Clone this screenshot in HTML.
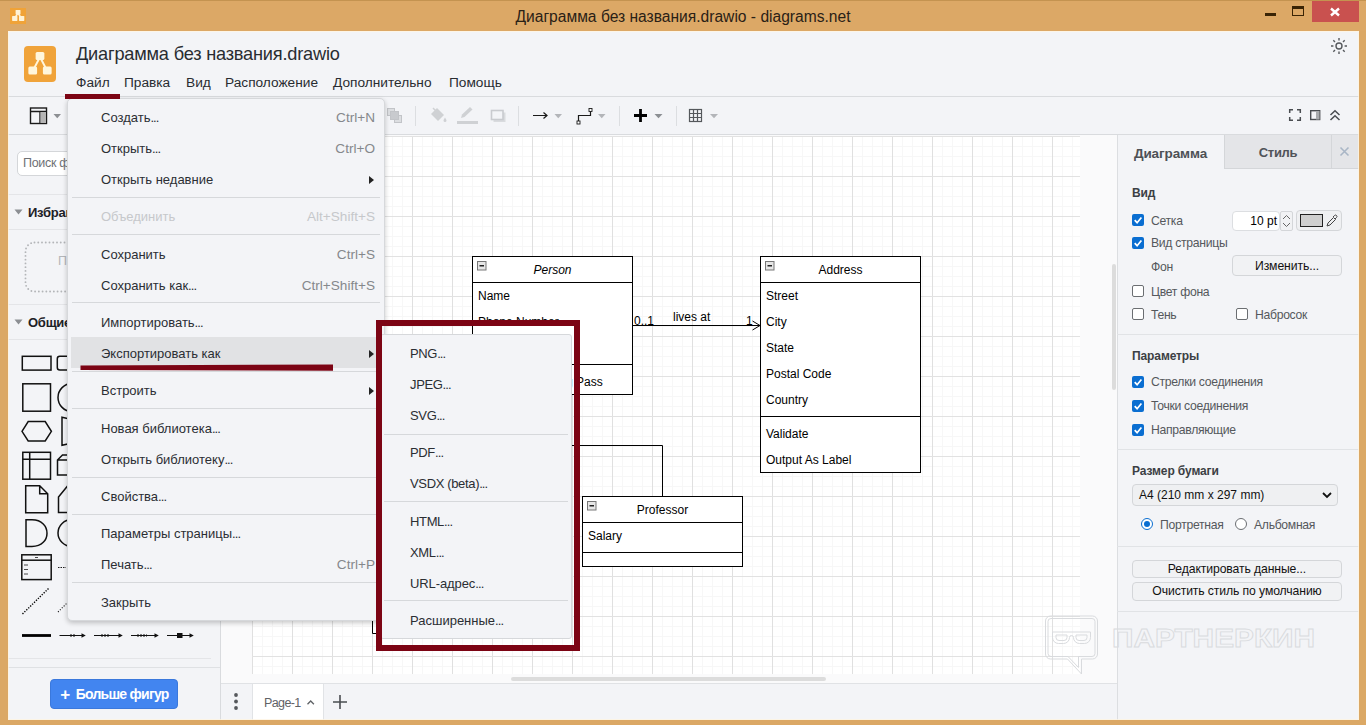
<!DOCTYPE html>
<html><head><meta charset="utf-8">
<style>
*{box-sizing:border-box;margin:0;padding:0}
html,body{width:1366px;height:725px;overflow:hidden}
body{font-family:"Liberation Sans",sans-serif;background:#dba865;position:relative;color:#1f2328;font-size:13px}
.a,.a>*{position:absolute}
.t{white-space:nowrap;line-height:16px;height:16px}
#titlebar{left:0;top:0;width:1366px;height:31px;background:#dca866;border-top:1px solid #c49350}
#wtitle{left:0;width:1366px;top:9px;text-align:center;font-size:15.6px;color:#2a2116}
#closebtn{left:1312px;top:1px;width:47px;height:21px;background:#c9514f}
#app{left:8px;top:31px;width:1351px;height:689px;background:#f3f4f7;overflow:hidden}
.h{background:#d9dbde;height:1px}
.v{background:#d9dbde;width:1px}
#logo{left:16px;top:15px;width:32px;height:36px;background:#f0a33a;border-radius:4px}
#fname{left:68px;top:15px;font-size:18.2px;color:#292c31;letter-spacing:-.2px}
.mi{top:44px;font-size:13.7px;color:#292c31}
#canvas{left:213px;top:104px;width:896px;height:548px;background:#fafafb;overflow:hidden}
#page{left:31px;top:1px;width:828px;height:538px;background-color:#fff;
background-image:linear-gradient(#e2e2e2 1px,transparent 1px),linear-gradient(90deg,#e0e0e0 1px,transparent 1px),linear-gradient(#f7f7f7 1px,transparent 1px),linear-gradient(90deg,#f7f7f7 1px,transparent 1px);
background-size:40px 40px,40px 40px,10px 10px,10px 10px;background-position:0 0,0 0,0 0,0 0}
.uml{border:1px solid #000;background:#fff}
.u{font-size:12px;color:#000;white-space:nowrap;line-height:14px;height:14px}
.cb{width:12px;height:12px;border-radius:2px}
.on{background:#0a6ed1}
.off{background:#fff;border:1px solid #6b6e72}
.lbl{font-size:12.2px;color:#55585c;letter-spacing:-.3px}
.bold{font-weight:bold;font-size:12px;color:#3c3f44;letter-spacing:-.1px}
.btn{background:#f1f2f4;border:1px solid #d4d6d9;border-radius:4px;text-align:center;font-size:12.2px;color:#111;line-height:17px;letter-spacing:-.1px}
#menu1{left:59px;top:67px;width:318px;height:523px;background:#f3f4f7;border:1px solid #d6d8db;border-radius:5px;box-shadow:0 2px 5px rgba(0,0,0,.22)}
#menu2{left:372px;top:302.5px;width:191.5px;height:305px;background:#f3f4f7;border:1px solid #d6d8db;border-radius:3px}
#menu2 .m{left:29px;margin-top:0}
#menu2 .l{letter-spacing:-.35px}
#menu2 .sep{left:3px;right:3px}
.m{left:33px;font-size:13px;color:#2b2e33;margin-top:1px}
.d{letter-spacing:-.9px}
.sc{right:9px;font-size:13.6px;color:#85888c;text-align:right;margin-top:1px}
.sep{left:4px;right:4px;height:1px;background:#d6d8db}
.dis{color:#c6c8cb}
.arr{right:10.5px;margin-top:1px;width:0;height:0;border-left:5px solid #222;border-top:4px solid transparent;border-bottom:4px solid transparent}
.red{background:#7c0414}
</style></head><body class="a">
<div id="titlebar"></div>
<div id="wtitle" class="t">Диаграмма без названия.drawio - diagrams.net</div>
<svg style="left:10px;top:8px" width="16" height="16" viewBox="0 0 16 16"><rect width="16" height="16" fill="#f0a338"/><path d="M8 5 L4.8 10 M8 5 L11.2 10" stroke="#fff3d6" stroke-width="1.5"/><rect x="5.6" y="2" width="4.9" height="4.4" rx=".6" fill="#fff3d6"/><rect x="2.1" y="8" width="5.3" height="4.9" rx=".6" fill="#fff3d6"/><rect x="9" y="8" width="5.3" height="4.9" rx=".6" fill="#fff3d6"/></svg>
<div style="left:1265px;top:13px;width:11px;height:3px;background:#3a2405"></div>
<div style="left:1292px;top:6px;width:12px;height:10px;border:1.5px solid #3a2405;border-top-width:3px"></div>
<div id="closebtn"></div>
<svg style="left:1329px;top:6px" width="12" height="12" viewBox="0 0 12 12"><path d="M2 2.5 L10 9.5 M10 2.5 L2 9.5" stroke="#fff" stroke-width="2.4"/></svg>
<div id="app" class="a">
 <div id="logo"></div>
 <svg style="left:16px;top:15px" width="32" height="36" viewBox="0 0 33 36" preserveAspectRatio="none"><path d="M16.5 11 L9 25 M16.5 11 L24 25" stroke="#fff6dc" stroke-width="2"/><rect x="12" y="6" width="9" height="8" rx="1.5" fill="#fff6dc"/><rect x="4.5" y="20.5" width="9" height="8" rx="1.5" fill="#fff6dc"/><rect x="19.5" y="20.5" width="9" height="8" rx="1.5" fill="#fff6dc"/></svg>
 <div id="fname" class="t">Диаграмма без названия.drawio</div>
 <div class="t mi" style="left:68px">Файл</div>
 <div class="t mi" style="left:116px">Правка</div>
 <div class="t mi" style="left:178px">Вид</div>
 <div class="t mi" style="left:217px">Расположение</div>
 <div class="t mi" style="left:325px">Дополнительно</div>
 <div class="t mi" style="left:441px">Помощь</div>
 <svg style="left:1322px;top:6px" width="18" height="18" viewBox="0 0 18 18" fill="none" stroke="#55585c" stroke-width="1.4"><circle cx="9" cy="9" r="3"/><path d="M9 1v2.4M9 14.6V17M1 9h2.4M14.6 9H17M3.3 3.3l1.7 1.7M13 13l1.7 1.7M14.7 3.3L13 5M5 13l-1.7 1.7"/></svg>
 <div class="h" style="left:0;top:65px;width:1351px"></div>
 <div class="h" style="left:0;top:103px;width:1351px"></div>
 <svg style="left:0;top:66px" width="1351" height="37" viewBox="8 97 1351 37">
  <g fill="none" stroke="#1a1a1a" stroke-width="1.4">
   <rect x="30.5" y="108" width="16" height="15.5"/><path d="M30.5 111.5h16M40 111.5v12"/><rect x="40.5" y="112" width="5.5" height="11" fill="#b5b5b5" stroke="none"/>
  </g>
  <path d="M53.5 114h7.5l-3.75 4.2z" fill="#8c8f93"/>
  <g fill="#dcdee1" stroke="#c2c4c8" stroke-width="1"><rect x="387.5" y="108.5" width="7" height="7"/><rect x="394.5" y="115.500" width="7" height="7"/><rect x="390.500" y="111.500" width="8" height="8" fill="#c8cace"/></g>
  <path d="M415.500 106v20M518.500 106v20M619.500 106v20M676.500 106v20" stroke="#dcdee1" stroke-width="1"/>
  <g fill="#cfd1d4"><path d="M431 114l6-6 7 7-6 6z"/><path d="M433 108l3 3" stroke="#cfd1d4" stroke-width="1.5"/><path d="M445 117.500c.8 1.300 1.500 2.200 1.500 3a1.500 1.500 0 0 1-3 0c0-.8.700-1.700 1.500-3z"/></g>
  <g fill="#cfd1d4"><rect x="457" y="121" width="21" height="3"/><path d="M461 118l1-3.500 8-7.500 2.500 2.500-8 7.500z"/></g>
  <g><rect x="493.500" y="112.500" width="12" height="9.500" fill="#d9dbde"/><rect x="491.500" y="110.500" width="11.500" height="9" fill="#f3f4f7" stroke="#c9cbcf" stroke-width="1.600"/></g>
  <path d="M533 115.500h14M543.500 112.500l3.500 3-3.500 3" fill="none" stroke="#1a1a1a" stroke-width="1.200"/>
  <path d="M554.500 114h7.500l-3.750 4.200z" fill="#b3b5b9"/>
  <path d="M578.500 121v-5.500h12v-5" fill="none" stroke="#1a1a1a" stroke-width="1.200"/><rect x="577" y="121" width="3" height="3" fill="#fff" stroke="#1a1a1a" stroke-width=".9"/><rect x="589" y="108.500" width="3" height="3" fill="#fff" stroke="#1a1a1a" stroke-width=".9"/>
  <path d="M598 114h7.500l-3.750 4.200z" fill="#b3b5b9"/>
  <path d="M640.500 109v13M634 115.500h13" stroke="#000" stroke-width="2.800"/>
  <path d="M654.500 114h8l-4 4.200z" fill="#8c8f93"/>
  <g fill="none" stroke="#55585c" stroke-width="1.200"><rect x="689.500" y="109.500" width="12" height="12"/><path d="M693.500 109.500v12M697.500 109.500v12M689.500 113.500h12M689.500 117.500h12"/></g>
  <path d="M710 114h8l-4 4.200z" fill="#b3b5b9"/>
  <g fill="none" stroke="#4a4d51" stroke-width="1.500"><path d="M1289.700 113v-3.300h3.300M1297 109.700h3.300v3.300M1300.300 117v3.300H1297M1293 120.300h-3.300V117"/></g>
  <rect x="1310.700" y="110.700" width="9" height="8.800" fill="none" stroke="#4a4d51" stroke-width="1.400"/><rect x="1316" y="111" width="3.500" height="8.500" fill="#a9abae"/>
  <path d="M1330.500 115l4.500-4.300 4.500 4.300M1330.500 120l4.500-4.300 4.500 4.300" fill="none" stroke="#4a4d51" stroke-width="1.500"/>
 </svg>
<!--TOOLBAR-END-->
 <div class="v" style="left:212px;top:104px;height:585px"></div>
 <div style="left:9px;top:120px;width:210px;height:25px;background:#fff;border:1px solid #d4d6d9;border-radius:5px"></div>
 <div class="t" style="left:15px;top:124px;font-size:12.5px;color:#6e7175;letter-spacing:-.3px">Поиск ф</div>
 <div class="h" style="left:0;top:163px;width:212px;background:#e4e5e8"></div>
 <div class="h" style="left:0;top:198px;width:212px;background:#e4e5e8"></div>
 <div class="h" style="left:0;top:273px;width:212px;background:#e4e5e8"></div>
 <div class="h" style="left:0;top:308px;width:212px;background:#e4e5e8"></div>
 <div class="h" style="left:0;top:627px;width:203px;background:#e4e5e8"></div>
 <div class="h" style="left:0;top:636px;width:212px;background:#dfe1e4"></div>
 <svg style="left:0;top:104px" width="212" height="585" viewBox="8 135 212 585">
  <path d="M14.500 209.500h8l-4 5zM14.500 319.500h8l-4 5z" fill="#8c8f93"/>
  <rect x="25.500" y="242.500" width="60" height="49" rx="9" fill="none" stroke="#b3b5b8" stroke-width="1.900" stroke-linecap="round" stroke-dasharray="0 3.750"/>
  <g fill="none" stroke="#111" stroke-width="1.500">
   <rect x="22.300" y="356.300" width="28.700" height="13.800"/>
   <rect x="57.300" y="356.300" width="28.700" height="13.800" rx="2.500"/>
   <rect x="22.800" y="383.800" width="27.700" height="27.400"/>
   <ellipse cx="72" cy="397.500" rx="14" ry="14"/>
   <path d="M22 431.300l6.200-9.700h17l6.200 9.700-6.200 9.700h-17z"/>
   <path d="M62 417.300l20 4.500v19l-20 4.500z"/>
   <rect x="22.800" y="452.300" width="27.700" height="26.900"/><path d="M29.700 452.300v26.900M22.800 459.300h27.700"/>
   <path d="M57.500 460l5-5h16v15l-5 5h-16zM57.500 460h16v15M73.500 460l5-5"/>
   <path d="M25.700 485.700h14l8 8v19h-22zM39.700 485.700v8h8"/>
   <path d="M58.500 497l9-11h16v26.500h-25z"/>
   <path d="M26 519.800h6c20 0 20 26.700 0 26.700h-6z"/>
   <ellipse cx="72" cy="533" rx="14" ry="13.500"/>
   <rect x="21.800" y="554.800" width="29.400" height="24.800"/><path d="M21.800 560.200h29.400"/>
  </g>
  <g stroke="#1c1c1c" stroke-width=".8"><path d="M24 565h4M24 569.500h4M24 574h4M35 557.500h3"/></g>
  <path d="M22.500 614L49 588" stroke="#000" stroke-width="1.400" stroke-dasharray="1.300 1.400" fill="none"/>
  <path d="M58 612l10-10" stroke="#1c1c1c" stroke-width="1.100" stroke-dasharray="1.100 1.600" fill="none"/>
  <path d="M58 567.500h8" stroke="#1c1c1c" stroke-width="1" stroke-dasharray="1.500 1"/>
  <path d="M22 635.500h29" stroke="#000" stroke-width="2.800"/>
  <g stroke="#111" stroke-width="1.100" fill="none"><path d="M59.500 635.500h23M94 635.500h26M131 635.500h25M167 635.500h24"/></g>
  <path d="M85.800 635.500l-4.300-2.300v4.600zM122.800 635.500l-4.300-2.300v4.600zM158.800 635.500l-4.300-2.300v4.600zM193.800 635.500l-4.300-2.300v4.600z" fill="#111"/>
  <path d="M70 635.500h5M101 635.500h9M137 635.500h10" stroke="#111" stroke-width="2" stroke-dasharray="2 1"/>
  <rect x="177" y="633" width="5.500" height="5" fill="#111"/>
 </svg>
 <div class="t" style="left:20px;top:174px;font-size:13px;letter-spacing:-.25px;font-weight:bold;color:#1d2126">Избранное</div>
 <div class="t" style="left:20px;top:284px;font-size:13px;letter-spacing:-.25px;font-weight:bold;color:#1d2126">Общие</div>
 <div class="t" style="left:50px;top:222px;font-size:12.500px;color:#b4b6b9">Перетащите</div>
 <div style="left:42px;top:648px;width:128px;height:30px;background:#4285f0;border:1px solid #3a78dc;border-radius:4px"></div>
 <div class="t" style="left:42px;top:655px;width:129px;text-align:center;color:#fff;font-weight:bold;font-size:14px;letter-spacing:-.75px"><span style="font-size:17px;line-height:14px;vertical-align:-1px;margin-right:3px">+</span> Больше фигур</div>
<!--SIDEBAR-END-->
 <div id="canvas" class="a"><div id="page"></div></div>
 <div class="v" style="left:1109px;top:104px;height:585px;background:#dcdee1"></div>
 <div class="h" style="left:213px;top:652px;width:896px;background:#e0e2e5"></div>
 <div style="left:1104px;top:233px;width:4px;height:126px;background:#dcdcdc;border-radius:2px"></div>
 <div style="left:503px;top:646px;width:315px;height:4px;background:#dcdcdc;border-radius:2px"></div>
 <!-- tabs -->
 <div style="left:244px;top:653px;width:72px;height:36px;background:#fff;border-left:1px solid #e1e3e6;border-right:1px solid #e1e3e6"></div>
 <div class="t" style="left:256px;top:664px;font-size:12.500px;color:#5f6266;letter-spacing:-.6px">Page-1</div>
 <svg style="left:213px;top:653px" width="160" height="36" viewBox="221 684 160 36"><circle cx="236" cy="695" r="1.900" fill="#55585c"/><circle cx="236" cy="701.500" r="1.900" fill="#55585c"/><circle cx="236" cy="708" r="1.900" fill="#55585c"/><path d="M307.500 704.200l3.200-3.200 3.200 3.200" fill="none" stroke="#5f6266" stroke-width="1.300"/><path d="M340 695v14M333 702h14" stroke="#4a4d51" stroke-width="1.600"/></svg>
 <!-- UML -->
 <div class="uml" style="left:464px;top:225px;width:161px;height:139px"></div>
 <div class="h" style="left:464px;top:251px;width:161px;background:#000"></div>
 <div class="h" style="left:464px;top:333px;width:161px;background:#000"></div>
 <div class="u" style="left:464px;top:232px;width:161px;text-align:center;font-style:italic">Person</div>
 <div class="u" style="left:470px;top:258px">Name</div>
 <div class="u" style="left:470px;top:284px">Phone Number</div>
 <div class="u" style="left:470px;top:310px">Email Address</div>
 <div class="u" style="left:470px;top:344px">Purchase Parking Pass</div>
 <div class="uml" style="left:752px;top:225px;width:161px;height:217px"></div>
 <div class="h" style="left:752px;top:251px;width:161px;background:#000"></div>
 <div class="h" style="left:752px;top:385px;width:161px;background:#000"></div>
 <div class="u" style="left:752px;top:232px;width:161px;text-align:center">Address</div>
 <div class="u" style="left:758px;top:258px">Street</div>
 <div class="u" style="left:758px;top:284px">City</div>
 <div class="u" style="left:758px;top:310px">State</div>
 <div class="u" style="left:758px;top:336px">Postal Code</div>
 <div class="u" style="left:758px;top:362px">Country</div>
 <div class="u" style="left:758px;top:396px">Validate</div>
 <div class="u" style="left:758px;top:422px">Output As Label</div>
 <div class="uml" style="left:574px;top:465px;width:161px;height:71px"></div>
 <div class="h" style="left:574px;top:491px;width:161px;background:#000"></div>
 <div class="h" style="left:574px;top:521px;width:161px;background:#000"></div>
 <div class="u" style="left:574px;top:472px;width:161px;text-align:center">Professor</div>
 <div class="u" style="left:580px;top:498px">Salary</div>
 <svg style="left:213px;top:104px" width="896" height="548" viewBox="221 135 896 548" fill="none" stroke="#000" stroke-width="1">
  <path d="M633 325.500h127M752.500 321l7.500 4.500-7.500 4.500"/>
  <path d="M560 445.500h102.500V496"/>
  <path d="M372.500 621v12.500H378"/>
  <g stroke="#777" fill="#e6e6e6"><rect x="477.500" y="261.500" width="8.500" height="8.500"/><rect x="765.500" y="261.500" width="8.500" height="8.500"/><rect x="587.500" y="501.500" width="8.500" height="8.500"/></g>
  <path d="M479.500 265.750h4.500M767.500 265.750h4.500M589.500 505.750h4.500" stroke="#222" stroke-width="1.500"/>
 </svg>
 <div class="u" style="left:626px;top:283px">0..1</div>
 <div class="u" style="left:665px;top:279px">lives at</div>
 <div class="u" style="left:738px;top:283px">1</div>
<!--CANVAS-END-->
 <!-- right panel: page x-8, y-31 -->
 <div style="left:1216px;top:104px;width:135px;height:33px;background:#e4e5e8"></div>
 <div class="v" style="left:1216px;top:104px;height:33px;background:#d4d6d9"></div>
 <div class="v" style="left:1323px;top:104px;height:33px;background:#d4d6d9"></div>
 <div class="h" style="left:1216px;top:137px;width:135px;background:#d4d6d9"></div>
 <div class="t" style="left:1109px;top:115px;width:107px;text-align:center;font-weight:bold;font-size:13.500px;color:#4d5055;letter-spacing:-.1px">Диаграмма</div>
 <div class="t" style="left:1217px;top:114px;width:106px;text-align:center;font-weight:bold;font-size:13px;color:#505358;letter-spacing:-.3px">Стиль</div>
 <svg style="left:1331px;top:115px" width="11" height="11" viewBox="0 0 11 11"><path d="M1.500 1.500l8 8M9.500 1.500l-8 8" stroke="#a9b6c6" stroke-width="1.600"/></svg>
 <div class="t bold" style="left:1124px;top:154px">Вид</div>
 <div class="cb on" style="left:1124px;top:183px"></div>
 <div class="t lbl" style="left:1143px;top:182px">Сетка</div>
 <div style="left:1224px;top:180px;width:48px;height:20px;background:#fff;border:1px solid #dcdee1;border-radius:4px"></div>
 <div class="t" style="left:1224px;top:182px;width:45px;text-align:right;font-size:12px;color:#000">10 pt</div>
 <div style="left:1272px;top:180px;width:13px;height:20px;background:#f1f2f4;border:1px solid #d4d6d9;border-radius:2px"></div>
 <svg style="left:1272px;top:180px" width="13" height="20" viewBox="0 0 13 20" fill="none" stroke="#666" stroke-width="1"><path d="M3 8l3.500-3.500L10 8M3 12l3.500 3.500L10 12"/></svg>
 <div style="left:1288px;top:179px;width:46px;height:21px;background:#eff0f2;border:1px solid #d4d6d9;border-radius:4px"></div>
 <div style="left:1292px;top:183px;width:23px;height:13px;background:#cfcfcf;border:1px solid #222"></div>
 <svg style="left:1317px;top:183px" width="14" height="14" viewBox="0 0 14 14" fill="none" stroke="#444" stroke-width="1"><path d="M2 12l1-3 5.500-5.500 2 2L5 11zM8 3l1.500-1.500a1.400 1.400 0 0 1 2 2L10 5"/></svg>
 <div class="cb on" style="left:1124px;top:206px"></div>
 <div class="t lbl" style="left:1143px;top:204px">Вид страницы</div>
 <div class="t lbl" style="left:1143px;top:228px">Фон</div>
 <div class="btn" style="left:1224px;top:224px;width:110px;height:21px;line-height:20px">Изменить...</div>
 <div class="cb off" style="left:1124px;top:254px"></div>
 <div class="t lbl" style="left:1143px;top:253px">Цвет фона</div>
 <div class="cb off" style="left:1124px;top:277px"></div>
 <div class="t lbl" style="left:1143px;top:276px">Тень</div>
 <div class="cb off" style="left:1228px;top:277px"></div>
 <div class="t lbl" style="left:1247px;top:276px">Набросок</div>
 <div class="h" style="left:1109px;top:303px;width:242px;background:#e1e3e6"></div>
 <div class="t bold" style="left:1124px;top:317px">Параметры</div>
 <div class="cb on" style="left:1124px;top:345px"></div>
 <div class="t lbl" style="left:1143px;top:343px">Стрелки соединения</div>
 <div class="cb on" style="left:1124px;top:369px"></div>
 <div class="t lbl" style="left:1143px;top:367px">Точки соединения</div>
 <div class="cb on" style="left:1124px;top:393px"></div>
 <div class="t lbl" style="left:1143px;top:391px">Направляющие</div>
 <div class="h" style="left:1109px;top:418px;width:242px;background:#e1e3e6"></div>
 <div class="t bold" style="left:1124px;top:432px">Размер бумаги</div>
 <div style="left:1124px;top:453px;width:206px;height:22px;background:#eff0f2;border:1px solid #d4d6d9;border-radius:4px"></div>
 <div class="t" style="left:1131px;top:456px;font-size:12px;color:#111">A4 (210 mm x 297 mm)</div>
 <svg style="left:1313px;top:459px" width="12" height="10" viewBox="0 0 12 10"><path d="M2 3l4 4 4-4" fill="none" stroke="#111" stroke-width="1.800"/></svg>
 <div style="left:1133px;top:487px;width:12px;height:12px;border-radius:6px;border:1.500px solid #0a6ed1;background:#fff"></div>
 <div style="left:1136px;top:490px;width:6px;height:6px;border-radius:3px;background:#0a6ed1"></div>
 <div class="t lbl" style="left:1152px;top:486px">Портретная</div>
 <div style="left:1227px;top:487px;width:12px;height:12px;border-radius:6px;border:1px solid #6b6e72;background:#fff"></div>
 <div class="t lbl" style="left:1246px;top:486px">Альбомная</div>
 <div class="h" style="left:1109px;top:515px;width:242px;background:#e1e3e6"></div>
 <div class="btn" style="left:1124px;top:529px;width:210px;height:18px;line-height:16.500px">Редактировать данные...</div>
 <div class="btn" style="left:1124px;top:551px;width:210px;height:18.500px;line-height:16.500px">Очистить стиль по умолчанию</div>
 <div class="h" style="left:1109px;top:580px;width:242px;background:#e1e3e6"></div>
 <svg style="left:1124px;top:183px;pointer-events:none" width="12" height="230" viewBox="0 0 12 230" fill="none" stroke="#fff" stroke-width="1.700"><path d="M2.700 6.200l2.400 2.500 4.300-5.200M2.700 29.200l2.400 2.500 4.300-5.200M2.700 168.200l2.400 2.500 4.300-5.200M2.700 192.200l2.400 2.500 4.300-5.200M2.700 216.200l2.400 2.500 4.300-5.200"/></svg>
 <!-- watermark -->
 <svg style="left:1030px;top:580px" width="300" height="70" viewBox="1038 611 300 70" fill="none" stroke="#d9dbde" stroke-width="1">
  <path d="M1045.500 621a5 5 0 0 1 5-5h42a5 5 0 0 1 5 5v33a5 5 0 0 1-5 5h-11v15l-14-15h-17a5 5 0 0 1-5-5z"/><path d="M1048 621.500a3 3 0 0 1 3-3h41a3 3 0 0 1 3 3v32a3 3 0 0 1-3 3h-13.500v11l-10.500-11h-17a3 3 0 0 1-3-3z"/>
  <path d="M1052.500 632h38v5.500a6 6 0 0 1-6 6h-5a6 6 0 0 1-6-6 2 2 0 0 0-4 0 6 6 0 0 1-6 6h-5a6 6 0 0 1-6-6z"/><path d="M1056 635h11v2.500a3 3 0 0 1-3 3h-5a3 3 0 0 1-3-3zM1076 635h11v2.500a3 3 0 0 1-3 3h-5a3 3 0 0 1-3-3z"/>
  <text x="1112" y="646.500" font-family="Liberation Sans, sans-serif" font-weight="bold" font-size="26.500" textLength="203" lengthAdjust="spacingAndGlyphs" stroke-width=".9">ПАРТНЕРКИН</text>
 </svg>
<!--RIGHT-END-->
 <!-- menu1: page(67,98)->app(59,67). y inside menu = pageY-98-1 -->
 <div id="menu1" class="a">
  <div style="left:3px;top:238px;width:310px;height:31px;background:#e1e2e4"></div>
  <div class="t m" style="top:10px">Создать<span class="d">...</span></div><div class="t sc" style="top:10px">Ctrl+N</div>
  <div class="t m" style="top:41px">Открыть<span class="d">...</span></div><div class="t sc" style="top:41px">Ctrl+O</div>
  <div class="t m" style="top:72px">Открыть недавние</div><div class="arr" style="top:76px"></div>
  <div class="sep" style="top:98px"></div>
  <div class="t m dis" style="top:109px">Объединить</div><div class="t sc dis" style="top:109px">Alt+Shift+S</div>
  <div class="sep" style="top:135px"></div>
  <div class="t m" style="top:147px">Сохранить</div><div class="t sc" style="top:147px">Ctrl+S</div>
  <div class="t m" style="top:178px">Сохранить как<span class="d">...</span></div><div class="t sc" style="top:178px">Ctrl+Shift+S</div>
  <div class="sep" style="top:203px"></div>
  <div class="t m" style="top:215px">Импортировать<span class="d">...</span></div>
  <div class="t m" style="top:246px">Экспортировать как</div><div class="arr" style="top:250px"></div>
  <div class="sep" style="top:272px"></div>
  <div class="t m" style="top:283px">Встроить</div><div class="arr" style="top:287px"></div>
  <div class="sep" style="top:309px"></div>
  <div class="t m" style="top:321px">Новая библиотека<span class="d">...</span></div>
  <div class="t m" style="top:352px">Открыть библиотеку<span class="d">...</span></div>
  <div class="sep" style="top:378px"></div>
  <div class="t m" style="top:389px">Свойства<span class="d">...</span></div>
  <div class="sep" style="top:415px"></div>
  <div class="t m" style="top:426px">Параметры страницы<span class="d">...</span></div>
  <div class="t m" style="top:457px">Печать<span class="d">...</span></div><div class="t sc" style="top:457px">Ctrl+P</div>
  <div class="sep" style="top:483px"></div>
  <div class="t m" style="top:495px">Закрыть</div>
 </div>
 <!-- menu2: page(382,333)->app(374,302) -->
 <div id="menu2" class="a">
  <div class="t m l" style="top:11px">PNG<span class="d">...</span></div>
  <div class="t m l" style="top:42px">JPEG<span class="d">...</span></div>
  <div class="t m l" style="top:73px">SVG<span class="d">...</span></div>
  <div class="sep" style="top:99px"></div>
  <div class="t m l" style="top:110px">PDF<span class="d">...</span></div>
  <div class="t m l" style="top:141px">VSDX (beta)<span class="d">...</span></div>
  <div class="sep" style="top:166px"></div>
  <div class="t m l" style="top:179px">HTML<span class="d">...</span></div>
  <div class="t m l" style="top:210px">XML<span class="d">...</span></div>
  <div class="t m" style="top:241px;letter-spacing:-.1px">URL-адрес<span class="d">...</span></div>
  <div class="sep" style="top:265.500px"></div>
  <div class="t m" style="top:278px">Расширенные<span class="d">...</span></div>
 </div>
 <!-- red annotations -->
 <div class="red" style="left:57px;top:62.800px;width:55px;height:5.500px"></div>
 <svg style="left:70px;top:330px" width="260" height="12" viewBox="78 361 260 12"><path d="M80.500 365.500L333 364.500v6.300L80.500 370z" fill="#7c0414"/></svg>
 <div style="left:367.500px;top:289px;width:204px;height:331px;border:6.200px solid #7c0414"></div>
<!--MENUS-END-->
 <div style="left:0;top:0;width:1351px;height:689px;border:1px solid rgba(255,244,224,.75);border-top-color:rgba(255,246,230,.9)"></div>
</div>
</body></html>
